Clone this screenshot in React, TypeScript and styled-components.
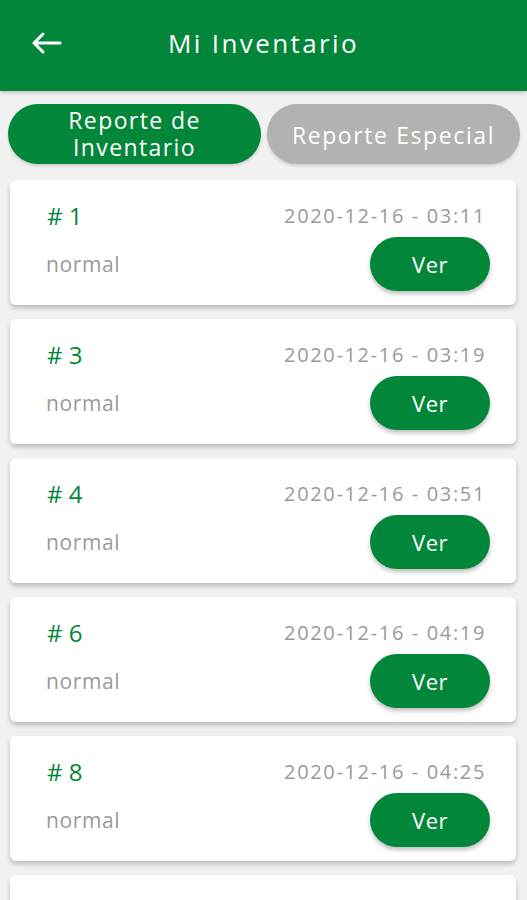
import styled, { createGlobalStyle } from 'styled-components';

const GREEN = '#02863a';

const GlobalStyle = createGlobalStyle`
  html, body {
    margin: 0;
    padding: 0;
    background: #f1f1f1;
    font-family: 'Open Sans', 'Liberation Sans', sans-serif;
  }
  * {
    box-sizing: border-box;
  }
`;

interface IReport {
  id: number;
  date: string;
  type: string;
}

const reports: IReport[] = [
  { id: 1, date: '2020-12-16 - 03:11', type: 'normal' },
  { id: 3, date: '2020-12-16 - 03:19', type: 'normal' },
  { id: 4, date: '2020-12-16 - 03:51', type: 'normal' },
  { id: 6, date: '2020-12-16 - 04:19', type: 'normal' },
  { id: 8, date: '2020-12-16 - 04:25', type: 'normal' },
  { id: 10, date: '2020-12-16 - 04:31', type: 'normal' },
];

function BackArrow() {
  return (
    <svg width="32" height="24" viewBox="0 0 32 24" fill="none">
      <path
        d="M29 12H3M12 3L3 12L12 21"
        stroke="#fff"
        strokeWidth="3"
        strokeLinecap="round"
        strokeLinejoin="round"
      />
    </svg>
  );
}

export default function App() {
  return (
    <>
      <GlobalStyle />
      <Screen>
        <Header>
          <BackButton>
            <BackArrow />
          </BackButton>
          <Title>Mi Inventario</Title>
        </Header>
        <Tabs>
          <Tab active>
            <TabLine>Reporte de</TabLine>
            <TabLine>Inventario</TabLine>
          </Tab>
          <Tab>
            <TabLine>Reporte Especial</TabLine>
          </Tab>
        </Tabs>
        <List>
          {reports.map((report) => (
            <Card key={report.id}>
              <CardRow>
                <Number># {report.id}</Number>
                <DateText>{report.date}</DateText>
              </CardRow>
              <CardRow>
                <TypeText>{report.type}</TypeText>
                <ViewButton>Ver</ViewButton>
              </CardRow>
            </Card>
          ))}
        </List>
      </Screen>
    </>
  );
}

const Screen = styled.div`
  width: 527px;
  height: 900px;
  overflow: hidden;
  background: #f1f1f1;
`;

const Header = styled.header`
  position: relative;
  height: 91px;
  background: ${GREEN};
  display: flex;
  align-items: center;
  justify-content: center;
  box-shadow: 0 2px 4px rgba(0, 0, 0, 0.2);
`;

const BackButton = styled.div`
  position: absolute;
  left: 31px;
  top: 31px;
  display: flex;
`;

const Title = styled.h1`
  margin: -6px 0 0 0;
  color: #fff;
  font-size: 26px;
  font-weight: 400;
  letter-spacing: 2.4px;
`;

const Tabs = styled.div`
  display: flex;
  gap: 6px;
  padding: 13px 7px 0 8px;
`;

const Tab = styled.div<{ active?: boolean }>`
  flex: 1;
  height: 60px;
  border-radius: 30px;
  display: flex;
  flex-direction: column;
  align-items: center;
  justify-content: center;
  color: #fff;
  font-size: 23px;
  letter-spacing: ${({ active }) => (active ? '1.4px' : '1.6px')};
  padding-top: ${({ active }) => (active ? '0' : '2px')};
  background: ${({ active }) => (active ? GREEN : '#b2b2b2')};
  box-shadow: 0 2px 3px rgba(0, 0, 0, 0.15);
`;

const TabLine = styled.span`
  display: block;
  height: 27px;
  line-height: 27px;
  white-space: nowrap;
`;

const List = styled.div`
  display: flex;
  flex-direction: column;
  gap: 14px;
  padding: 16px 11px 0 10px;
`;

const Card = styled.div`
  height: 125px;
  background: #fff;
  border-radius: 6px;
  box-shadow: 0 3px 5px rgba(0, 0, 0, 0.22);
  padding: 19px 26px 0 36px;
  display: flex;
  flex-direction: column;
  gap: 5px;
`;

const CardRow = styled.div`
  display: flex;
  align-items: center;
  justify-content: space-between;
`;

const Number = styled.span`
  color: ${GREEN};
  font-size: 24px;
  padding-left: 1px;
`;

const DateText = styled.span`
  color: #9a9a9a;
  font-size: 20px;
  letter-spacing: 1.65px;
  padding-right: 4px;
`;

const TypeText = styled.span`
  color: #9a9a9a;
  font-size: 21px;
  letter-spacing: 0.6px;
`;

const ViewButton = styled.button`
  width: 120px;
  height: 54px;
  border: none;
  border-radius: 27px;
  background: ${GREEN};
  color: #fff;
  font-family: inherit;
  font-size: 22px;
  letter-spacing: 0.5px;
  box-shadow: 0 3px 4px rgba(0, 0, 0, 0.25);
`;
